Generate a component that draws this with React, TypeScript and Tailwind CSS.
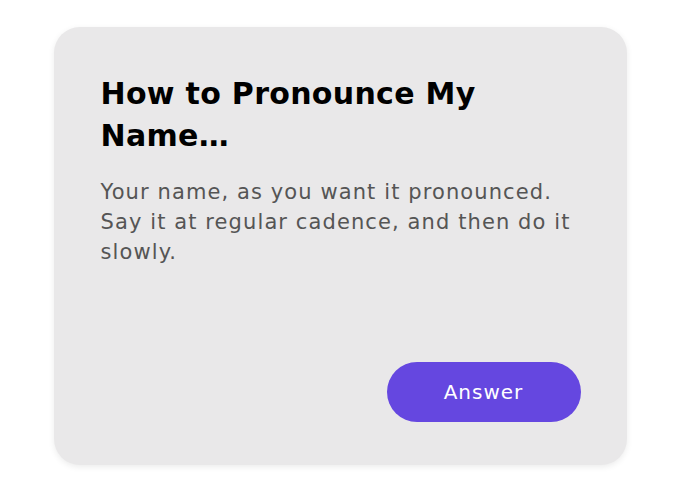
import React from 'react';

export default function App() {
  return (
    <div className="min-h-screen bg-white flex items-center justify-center font-['DejaVu_Sans',sans-serif]">
      <div className="w-[573px] h-[438px] rounded-[26px] bg-[#e9e8e9] shadow-[0_2px_6px_rgba(0,0,0,0.08)] flex flex-col pl-[47px] pr-[46px] pt-[46px] pb-[43px]">
        <h1 className="text-[30px] leading-[42px] font-bold text-black tracking-[0.3px]">
          How to Pronounce My
          <br />
          Name…
        </h1>
        <p className="mt-[20px] text-[21px] leading-[30px] text-[#555555] tracking-[1.1px]">
          Your name, as you want it pronounced.
          <br />
          Say it at regular cadence, and then do it
          <br />
          slowly.
        </p>
        <div className="mt-auto flex justify-end">
          <button className="w-[194px] h-[60px] rounded-full bg-[#6547e0] text-white text-[20px] tracking-[1px]">
            Answer
          </button>
        </div>
      </div>
    </div>
  );
}
